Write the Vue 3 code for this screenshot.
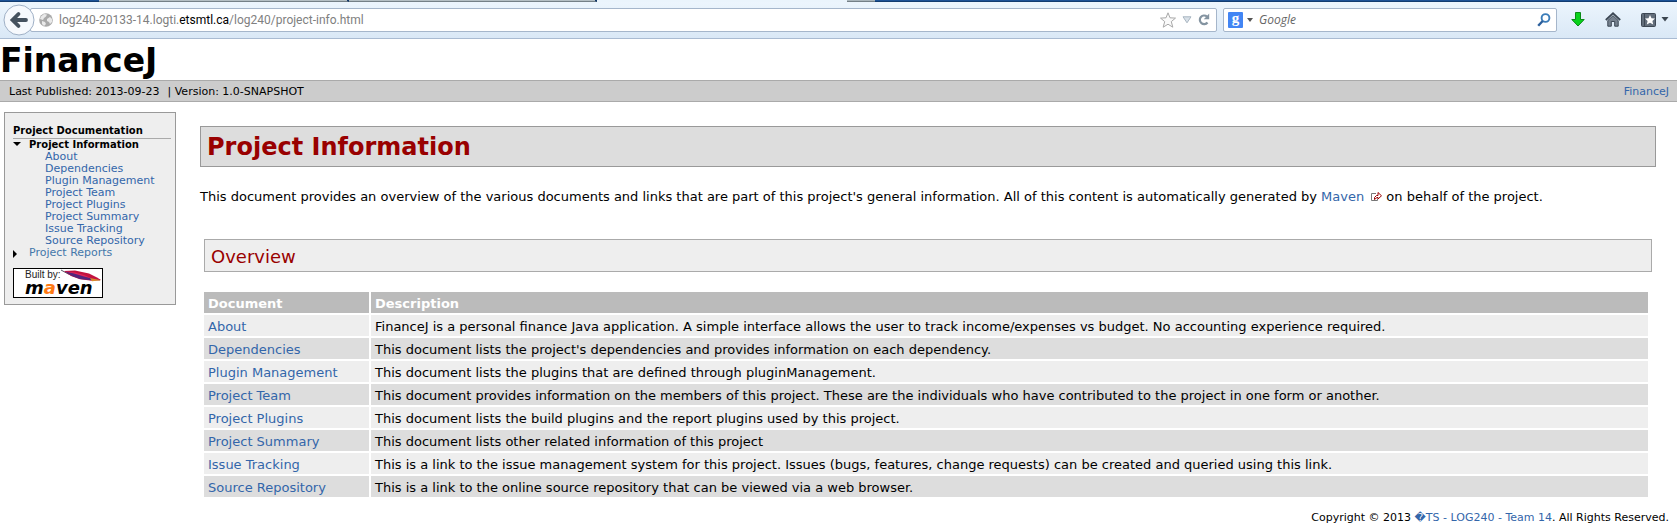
<script setup>
const docs = [
  { name: 'About', text: 'FinanceJ is a personal finance Java application. A simple interface allows the user to track income/expenses vs budget. No accounting experience required.' },
  { name: 'Dependencies', text: "This document lists the project's dependencies and provides information on each dependency." },
  { name: 'Plugin Management', text: 'This document lists the plugins that are defined through pluginManagement.' },
  { name: 'Project Team', text: 'This document provides information on the members of this project. These are the individuals who have contributed to the project in one form or another.' },
  { name: 'Project Plugins', text: 'This document lists the build plugins and the report plugins used by this project.' },
  { name: 'Project Summary', text: 'This document lists other related information of this project' },
  { name: 'Issue Tracking', text: 'This is a link to the issue management system for this project. Issues (bugs, features, change requests) can be created and queried using this link.' },
  { name: 'Source Repository', text: 'This is a link to the online source repository that can be viewed via a web browser.' }
]
</script>

<template>
  <div class="window">
    <div class="tabstrip">
      <span class="glass first"></span>
      <span class="tab left"></span>
      <span class="tab"></span>
      <span class="active"></span>
      <span class="newtab"></span>
      <span class="glass"></span>
    </div>

    <header class="toolbar">
      <button class="back" type="button" aria-label="Back">
        <svg width="32" height="32" viewBox="0 0 32 32">
          <circle cx="16" cy="16" r="15" fill="#f6f9fd" stroke="#9fb0c6" />
          <path d="M23 16H10.500M15.500 10 9.500 16l6 6" fill="none" stroke="#45525f" stroke-width="3.800" stroke-linecap="round" />
        </svg>
      </button>
      <div class="location">
        <svg class="globe" width="14" height="14" viewBox="0 0 14 14">
          <circle cx="7" cy="7" r="6.800" fill="#a9a9a9" />
          <path d="M2 3.500 5 1l3 .5-1 2L5 5 4 7 1 6zM8 6l3-2 2 2v3l-2 2-1-2-2-1zM3 8l3 1 1 2-2 2-2-2z" fill="#e9e9e9" />
        </svg>
        <div class="url">log240-20133-14.logti.<b>etsmtl.ca</b>/log240/project-info.html</div>
        <button type="button" aria-label="Bookmark this page">
          <svg width="16" height="16" viewBox="0 0 16 16">
            <path d="M8 .8l2 5 5.500.3-4.200 3.500 1.500 5.600L8 12.200l-4.800 3 1.500-5.600L.5 6.100 6 5.800z" fill="#fafafa" stroke="#a8a8a8" />
          </svg>
        </button>
        <button type="button" aria-label="History">
          <svg width="10" height="8" viewBox="0 0 10 8"><path d="M1 .8h8L5 6.800z" fill="#d9e1e9" stroke="#a9b5c0" /></svg>
        </button>
        <button type="button" aria-label="Reload">
          <svg width="12" height="13" viewBox="0 0 12 13">
            <path d="M9 3.600A4.300 4.300 0 1 0 9.500 9.500" fill="none" stroke="#8494a1" stroke-width="2.200" />
            <path d="M11.200.5v5.700H5.800z" fill="#8494a1" />
          </svg>
        </button>
      </div>
      <div class="search">
        <button class="engine" type="button" aria-label="Search engine">
          <span class="g">g</span>
          <svg width="6" height="4" viewBox="0 0 6 4"><path d="M0 0h6L3 4z" fill="#555" /></svg>
        </button>
        <input type="text" placeholder="Google" aria-label="Search with Google">
        <button type="button" aria-label="Search">
          <svg width="14" height="14" viewBox="0 0 14 14">
            <circle cx="8.500" cy="5" r="3.900" fill="none" stroke="#3b7cb8" stroke-width="1.900" />
            <path d="M5.700 8 1.200 12.800" stroke="#2c5f9c" stroke-width="2.400" />
          </svg>
        </button>
      </div>
      <div class="tools">
        <button type="button" aria-label="Downloads">
          <svg width="14" height="15" viewBox="0 0 14 15"><path d="M4.500.5h5v7h3.700L7 14 .8 7.500h3.700z" fill="#09d21c" stroke="#098a16" /></svg>
        </button>
        <button type="button" aria-label="Home">
          <svg width="16" height="15" viewBox="0 0 16 15">
            <path d="M2.800 8.500 8 3.700l5.200 4.800v5.700H9.700V9.500H6.300v4.700H2.800z" fill="#76818e" stroke="#3c4754" />
            <path d="M.8 8 8 1.300 15.200 8" fill="none" stroke="#3c4754" stroke-width="1.800" />
          </svg>
        </button>
        <button class="marks" type="button" aria-label="Bookmarks">
          <svg width="15" height="14" viewBox="0 0 15 14">
            <rect x=".5" y=".5" width="14" height="13" rx="1" fill="#626d7a" stroke="#3e4854" />
            <path d="M3.500 1v12" stroke="#3e4854" />
            <path d="M9 2l1.500 3.300 3.500.3-2.600 2.400.8 3.500L9 9.700l-3.200 1.800.8-3.500L4 5.600l3.500-.3z" fill="#fff" />
          </svg>
          <svg width="8" height="5" viewBox="0 0 8 5"><path d="M.5 0h7L4 4.500z" fill="#3c4650" /></svg>
        </button>
      </div>
    </header>

    <div class="banner">FinanceJ</div>
    <div class="crumbs">
      <div><span>Last Published: 2013-09-23</span><span class="version">| Version: 1.0-SNAPSHOT</span></div>
      <a href="#">FinanceJ</a>
    </div>

    <div class="body">
      <nav class="side">
        <h5>Project Documentation</h5>
        <ul>
          <li class="open">
            <svg class="mark" width="8" height="7" viewBox="0 0 8 7"><path d="M0 0h8L4 4z" /></svg>
            <strong>Project Information</strong>
            <ul>
              <li v-for="d in docs" :key="d.name"><a href="#">{{ d.name }}</a></li>
            </ul>
          </li>
          <li>
            <svg class="mark" width="7" height="8" viewBox="0 0 7 8"><path d="M0 0l4 4-4 4z" /></svg>
            <a class="visited" href="#">Project Reports</a>
          </li>
        </ul>
        <a class="powered" href="#" aria-label="Built by Maven">
          <svg width="90" height="30" viewBox="0 0 90 30">
            <rect x=".5" y=".5" width="89" height="29" fill="#fff" stroke="#000" />
            <text x="12" y="10" class="built">Built by:</text>
            <text x="12" y="26" class="maven">m<tspan fill="#ff7a14">a</tspan>ven</text>
            <path d="M48 2q7 5 17 7l22 3" fill="none" stroke="#556" />
            <path d="M51 3l11-.5 14 3 8 4 4 2.500-9 .8-12-1.500-9-3.300z" fill="#c3123f" />
            <path d="M52 3.500l9 1.500 9 2.500 9 3.200-1 1.500-11-1.200-8-3z" fill="#54257c" />
            <path d="M52 3.200l10 1.300 9 2.500 8 3.500-8-2-10-3z" fill="#e0245a" />
            <path d="M77 10l11 2.200-9 1z" fill="#d98b2b" />
          </svg>
        </a>
      </nav>

      <main class="content">
        <h2>Project Information</h2>
        <p>This document provides an overview of the various documents and links that are part of this project's general information. All of this content is automatically generated by <a class="external" href="#">Maven<svg width="11" height="9" viewBox="0 0 11 9"><path d="M5 1.500H.5v7h6V7" fill="none" stroke="#777" /><path d="M3.500 7.500v-2l2-2h1.500v-3l3.500 3.300L7 7V5.500H6z" fill="#fff" stroke="#900" /></svg></a> on behalf of the project.</p>
        <section>
          <h3>Overview</h3>
          <table>
            <thead>
              <tr><th scope="col">Document</th><th scope="col">Description</th></tr>
            </thead>
            <tbody>
              <tr v-for="d in docs" :key="d.name">
                <td><a href="#">{{ d.name }}</a></td>
                <td>{{ d.text }}</td>
              </tr>
            </tbody>
          </table>
        </section>
      </main>
    </div>

    <footer>Copyright © 2013 <a href="#">&#xFFFD;TS - LOG240 - Team 14</a>. All Rights Reserved.</footer>
  </div>
</template>

<style>
body { background: #fff; }
</style>

<style scoped>
.window { font: 13px/17px Verdana, "DejaVu Sans", sans-serif; color: #000; }
.window * { box-sizing: border-box; }
a { color: #36a; text-decoration: none; }
button { display: flex; align-items: center; border: 0; padding: 0; background: none; }
svg { display: block; flex: none; }

.tabstrip { display: flex; height: 2px; background: #1c5296; }
.glass { flex: 1; border-bottom: 1px solid #123c70; }
.glass.first { flex: 0 0 99px; }
.tab { flex: 0 0 248px; background: #b4bfc4; border-bottom: 1px solid #748087; border-right: 2px solid #12386a; }
.tab.left { flex-basis: 250px; }
.active { flex: 0 0 250px; background: #eaf4fc; }
.newtab { flex: 0 0 28px; background: #a9b5bb; border-bottom: 1px solid #748087; }

.toolbar { display: flex; align-items: center; height: 37px; padding: 0 8px 1px 3px; border-bottom: 1px solid #a9bbd2; background: linear-gradient(#ecf5fd, #dae8f6); }
.back { z-index: 1; margin-right: -5px; }
.location, .search { display: flex; align-items: center; height: 24px; border: 1px solid #a5b6cb; border-radius: 2px; background: #fff; }
.location { flex: 1; gap: 6px; padding: 0 6px 0 8px; }
.url { flex: 1; font: 12px/20px Roboto, sans-serif; color: #808080; white-space: nowrap; }
.url b { font-weight: 400; color: #000; }
.search { flex: 0 0 334px; margin-left: 6px; padding: 0 5px 0 4px; }
.engine { gap: 4px; }
.g { width: 15px; height: 16px; border-radius: 1px; background: #4285f4; color: #fff; font: 700 15px/12px "Liberation Serif", serif; text-align: center; }
.search input { flex: 1; min-width: 0; border: 0; padding: 0 0 0 6px; background: none; font: italic 12px/20px "Open Sans", sans-serif; }
.search input::placeholder { color: #666; opacity: 1; }
.tools { display: flex; align-items: center; gap: 20px; padding-left: 14px; }
.marks { gap: 5px; }

.banner { height: 41px; font-size: 33px; line-height: 44px; font-weight: 700; }
.crumbs { display: flex; justify-content: space-between; padding: 4px 8px 2px 9px; border: solid #aaa; border-width: 1px 0; background: #ccc; font-size: 11px; line-height: 14px; }
.version { margin-left: 8px; }

.body { display: flex; align-items: flex-start; gap: 24px; padding: 10px 21px 0 4px; }
.side { flex: 0 0 172px; padding: 11px 4px 6px 8px; border: 1px solid #999; background: #eee; font-size: 11px; line-height: 12px; }
.side h5 { margin: 0; padding-bottom: 1px; border-bottom: 1px solid #aaa; font-size: 10px; line-height: 13px; }
.side strong { display: block; font-size: 10px; }
.side ul { margin: 0; padding: 0; list-style: none; }
.side li { position: relative; padding-left: 16px; }
.mark { position: absolute; left: 0; top: 3px; }
.visited { color: #47a; }
.powered { display: block; margin-top: 9px; }
.built { font: 10px "Liberation Sans", sans-serif; fill: #222; }
.maven { font: italic 700 18px "DejaVu Sans", sans-serif; }

.content { flex: 1; padding-top: 14px; }
h2 { margin: 0; padding: 5px 6px 3px; border: 1px solid #999; background: #ddd; color: #900; font-size: 24px; line-height: 31px; }
p { margin: 21px 0 0; }
.external svg { display: inline-block; margin-left: 7px; }
section { padding: 34px 4px 0; }
h3 { margin: 0 0 20px; padding: 5px 6px 3px; border: 1px solid #aaa; background: #eee; color: #900; font-size: 18px; line-height: 23px; font-weight: 400; }
table { width: calc(100% - 4px); border-spacing: 0; border-collapse: collapse; }
th, td { padding: 3px 4px 1px; text-align: left; }
th { background: #bbb; color: #fff; }
th:first-child, td:first-child { width: 166px; border-right: 2px solid #fff; }
td { border-top: 2px solid #fff; background: #eee; }
tr:nth-child(even) td { background: #ddd; }
footer { padding: 14px 8px 0; font-size: 11px; line-height: 14px; text-align: right; }
</style>
